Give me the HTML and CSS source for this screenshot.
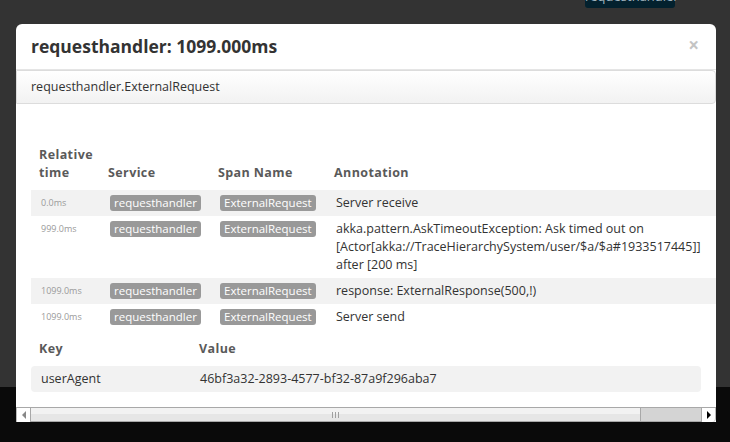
FILE: index.html
```html
<!DOCTYPE html>
<html>
<head>
<meta charset="utf-8">
<link rel="stylesheet" href="styles.css">
</head>
<body>
<div class="page">
  <span class="bg-badge">requesthandler</span>
</div>
<div class="modal">
  <div class="modal-header">
    <span class="close">×</span>
    <h3 class="title">requesthandler: 1099.000ms</h3>
  </div>
  <div class="subheader">requesthandler.ExternalRequest</div>
  <div class="modal-body">
    <table class="annotations">
      <colgroup>
        <col class="c-time"><col class="c-service"><col class="c-span"><col class="c-ann">
      </colgroup>
      <thead>
        <tr><th>Relative<br>time</th><th>Service</th><th>Span Name</th><th>Annotation</th></tr>
      </thead>
      <tbody>
        <tr class="striped">
          <td class="time">0.0ms</td>
          <td><span class="label">requesthandler</span></td>
          <td><span class="label">ExternalRequest</span></td>
          <td class="ann">Server receive</td>
        </tr>
        <tr>
          <td class="time">999.0ms</td>
          <td><span class="label">requesthandler</span></td>
          <td><span class="label">ExternalRequest</span></td>
          <td class="ann">akka.pattern.AskTimeoutException: Ask timed out on [Actor[akka://TraceHierarchySystem/user/$a/$a#1933517445]] after [200 ms]</td>
        </tr>
        <tr class="striped">
          <td class="time">1099.0ms</td>
          <td><span class="label">requesthandler</span></td>
          <td><span class="label">ExternalRequest</span></td>
          <td class="ann">response: ExternalResponse(500,!)</td>
        </tr>
        <tr>
          <td class="time">1099.0ms</td>
          <td><span class="label">requesthandler</span></td>
          <td><span class="label">ExternalRequest</span></td>
          <td class="ann">Server send</td>
        </tr>
      </tbody>
    </table>
    <table class="kv">
      <colgroup><col class="c-key"><col class="c-val"></colgroup>
      <thead><tr><th>Key</th><th>Value</th></tr></thead>
      <tbody>
        <tr><td class="k">userAgent</td><td class="v">46bf3a32-2893-4577-bf32-87a9f296aba7</td></tr>
      </tbody>
    </table>
  </div>
  <div class="hscroll">
    <div class="sb-btn sb-left"><span class="tri-left"></span></div>
    <div class="sb-thumb"><span class="grip"></span><span class="grip"></span><span class="grip"></span></div>
    <div class="sb-track"></div>
    <div class="sb-btn sb-right"><span class="tri-right"></span></div>
  </div>
</div>
</body>
</html>
```
FILE: styles.css
```css
html {
  background: #0a0a0a;
}
body {
  margin: 0;
  font-family: "Open Sans", "Noto Sans", sans-serif;
  color: #333;
  font-size: 12.5px;
  line-height: 18px;
}
.page {
  height: 387px;
  background: #333;
  position: relative;
}
.bg-badge {
  position: absolute;
  left: 585px;
  top: -11px;
  width: 90px;
  height: 19px;
  box-sizing: border-box;
  background: #03212e;
  border-radius: 3px;
  color: #9fb3bf;
  font-size: 13px;
  line-height: 14px;
  text-align: center;
}
.modal {
  position: absolute;
  left: 16px;
  top: 24px;
  width: 700px;
  background: #fff;
  border-radius: 6px 6px 0 0;
  overflow: hidden;
}
.modal-header {
  height: 43px;
  border-bottom: 1px solid #e5e5e5;
  padding: 0 15px 2px 15px;
  display: flex;
  flex-direction: row-reverse;
  justify-content: space-between;
  align-items: center;
}
.title {
  margin: 0;
  font-size: 17.5px;
  font-weight: 700;
  line-height: 24px;
  color: #333;
}
.close {
  font-size: 19px;
  font-weight: 700;
  color: #c4c4c4;
  line-height: 20px;
  margin-right: 2px;
  margin-top: -1px;
}
.subheader {
  height: 31px;
  border: 1px solid #dcdcdc;
  border-radius: 0 4px 4px 0;
  background: linear-gradient(#fff, #f2f2f2);
  padding: 0 14px 1px 14px;
  box-sizing: content-box;
  display: flex;
  align-items: center;
  font-size: 12.5px;
  color: #333;
}
.modal-body {
  height: 303px;
  box-sizing: border-box;
  padding: 38px 15px 0 15px;
  overflow: hidden;
}
table {
  border-collapse: collapse;
  table-layout: fixed;
}
.annotations {
  width: 695px;
}
.c-time { width: 69px; }
.c-service { width: 110px; }
.c-span { width: 116px; }
.c-ann { width: 400px; }
th {
  text-align: left;
  vertical-align: bottom;
  font-weight: 700;
  color: #5a5a5a;
  letter-spacing: 0.4px;
  padding: 4px 8px 8px 8px;
  font-size: 12.5px;
  line-height: 18px;
}
td {
  vertical-align: top;
  padding: 4px 8px;
  line-height: 18px;
}
.striped td {
  background: #f2f2f2;
}
.time {
  font-size: 9px;
  color: #9a9a9a;
  padding-left: 10px;
}
.label {
  display: inline-block;
  background: #999;
  color: #fff;
  font-size: 11.5px;
  line-height: 16px;
  padding: 0 4px;
  border-radius: 3px;
  margin-top: 1px;
  margin-left: 2px;
}
.ann {
  padding-left: 10px;
  font-size: 12.5px;
}
.kv {
  width: 670px;
  margin-top: 6px;
}
.c-key { width: 160px; }
.kv td {
  background: #f2f2f2;
  padding: 4px 9px;
}
.kv .k {
  padding-left: 10px;
  border-radius: 4px 0 0 4px;
}
.kv .v {
  border-radius: 0 4px 4px 0;
}
.hscroll {
  height: 14px;
  display: flex;
  border-top: 1px solid #a8a8a8;
}
.sb-btn {
  flex: none;
  width: 14px;
  box-sizing: border-box;
  background: #fff;
  display: flex;
  align-items: center;
  justify-content: center;
}
.sb-left {
  border-left: 1px solid #bbb;
}
.sb-right {
  border-right: 1px solid #bbb;
  border-radius: 0 0 4px 0;
}
.tri-left {
  width: 0;
  height: 0;
  border-top: 4px solid transparent;
  border-bottom: 4px solid transparent;
  border-right: 4px solid #888;
}
.tri-right {
  width: 0;
  height: 0;
  border-top: 4px solid transparent;
  border-bottom: 4px solid transparent;
  border-left: 4px solid #000;
}
.sb-thumb {
  flex: none;
  width: 611px;
  border-left: 1px solid #a8a8a8;
  border-right: 1px solid #a8a8a8;
  border-bottom: 1px solid #a8a8a8;
  background: linear-gradient(#f2f2f2 0, #f2f2f2 50%, #e6e6e6 50%, #e6e6e6 100%);
  display: flex;
  justify-content: center;
  align-items: center;
  gap: 2px;
  box-sizing: border-box;
  height: 14px;
}
.grip {
  width: 1px;
  height: 6px;
  background: #a0a0a0;
}
.sb-track {
  flex: 1;
  background: #d4d4d4;
  border-right: 1px solid #a8a8a8;
  border-bottom: 1px solid #a8a8a8;
}
```
